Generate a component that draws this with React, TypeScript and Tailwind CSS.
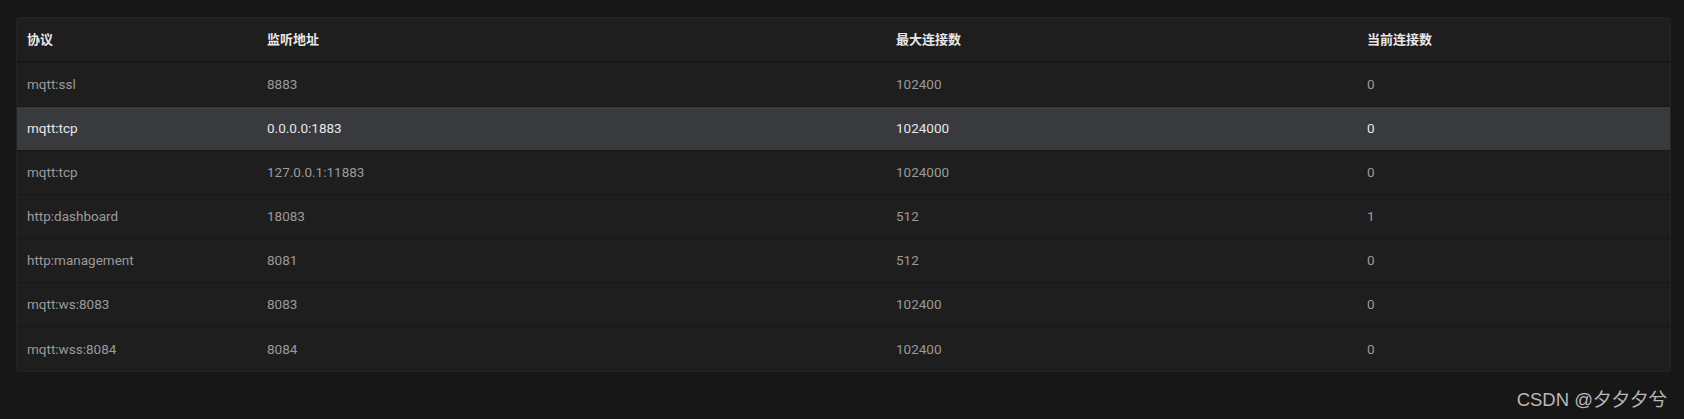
const rows = [
  { proto: "mqtt:ssl", addr: "8883", max: "102400", cur: "0" },
  { proto: "mqtt:tcp", addr: "0.0.0.0:1883", max: "1024000", cur: "0", active: true },
  { proto: "mqtt:tcp", addr: "127.0.0.1:11883", max: "1024000", cur: "0" },
  { proto: "http:dashboard", addr: "18083", max: "512", cur: "1" },
  { proto: "http:management", addr: "8081", max: "512", cur: "0" },
  { proto: "mqtt:ws:8083", addr: "8083", max: "102400", cur: "0" },
  { proto: "mqtt:wss:8084", addr: "8084", max: "102400", cur: "0" },
];

const cols = "grid grid-cols-[240px_629px_471px_1fr]";

export default function App() {
  return (
    <div className="w-[1684px] h-[419px] bg-[#171717] pt-[17px] pl-[16px] pr-[13px] font-['Roboto','Noto_Sans_CJK_SC',sans-serif]">
      <div className="rounded-[3px] border border-[#232323] bg-[#1f1e1f] overflow-hidden">
        <div className={`${cols} h-[45px] items-center border-b-2 border-[#161616] text-[13px] font-bold text-[#e8e8e8]`}>
          <div className="px-[10px]">协议</div>
          <div className="px-[10px]">监听地址</div>
          <div className="px-[10px]">最大连接数</div>
          <div className="px-[10px]">当前连接数</div>
        </div>
        {rows.map((r, i) => (
          <div
            key={i}
            className={`${cols} h-[44px] items-center text-[13.5px] ${
              i < rows.length - 1 ? "border-b border-[#171717]" : ""
            } ${r.active ? "bg-[#393a3e] text-[#e6e6e6]" : "text-[#9a9a9a]"}`}
          >
            <div className="px-[10px]">{r.proto}</div>
            <div className="px-[10px]">{r.addr}</div>
            <div className="px-[10px]">{r.max}</div>
            <div className="px-[10px]">{r.cur}</div>
          </div>
        ))}
      </div>
      <div className="flex justify-end pr-[4px] mt-[15px]">
        <span className="text-[18.5px] leading-[26px] text-[#b8b8b8] font-['Liberation_Sans','Noto_Sans_CJK_SC',sans-serif]">
          CSDN @夕夕夕兮
        </span>
      </div>
    </div>
  );
}
